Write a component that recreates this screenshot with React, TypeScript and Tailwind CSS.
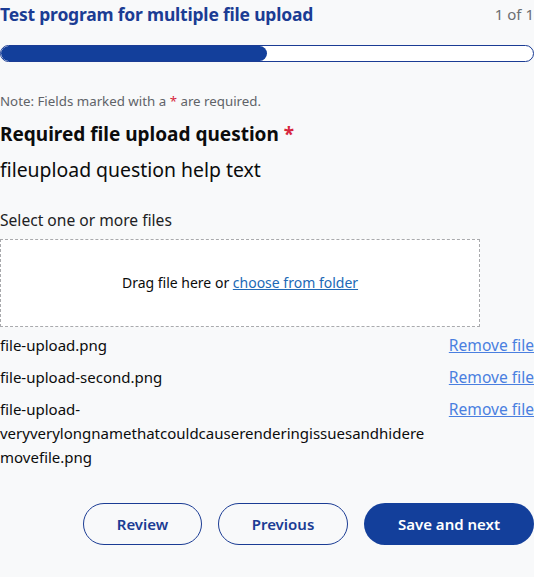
const files = [
  "file-upload.png",
  "file-upload-second.png",
  "file-upload-veryverylongnamethatcouldcauserenderingissuesandhideremovefile.png",
];

export default function App() {
  return (
    <div
      className="min-h-screen w-[534px] bg-[#f8f9fa] text-[#0b0c0c]"
      style={{ fontFamily: '"Noto Sans", "Open Sans", sans-serif' }}
    >
      {/* Header */}
      <div className="flex items-start justify-between pt-[2px]">
        <h1 className="text-[17.5px] leading-[24px] font-bold text-[#1b3c94] tracking-[-0.2px]">
          Test program for multiple file upload
        </h1>
        <span className="text-[15px] leading-[24px] text-[#6b6e72]">1 of 1</span>
      </div>

      <div className="mt-[19px] h-[17px] w-full rounded-full border border-[#1b3c94] bg-white overflow-hidden">
        <div className="h-full w-1/2 rounded-full bg-[#133f9b]" />
      </div>

      <p className="mt-[29px] text-[13.3px] leading-[20px] text-[#5f6368]">
        Note: Fields marked with a <span className="text-[#d7263d]">*</span> are required.
      </p>

      <h2 className="mt-[10px] text-[19px] leading-[26px] font-bold">
        Required file upload question <span className="text-[#d7263d]">*</span>
      </h2>
      <p className="mt-[10px] text-[19.4px] leading-[26px]">fileupload question help text</p>

      <p className="mt-[26px] text-[15.6px] leading-[22px] text-[#202124]">Select one or more files</p>

      <div className="mt-[8px] flex h-[88px] w-[480px] items-center justify-center border border-dashed border-[#a9aaad] bg-white">
        <p className="text-[14px] leading-[20px]">
          Drag file here or{" "}
          <a href="#" className="text-[#2169b6] underline">
            choose from folder
          </a>
        </p>
      </div>

      {/* Uploaded files */}
      <ul className="mt-[6px] flex flex-col gap-[8px]">
        {files.map((name) => (
          <li key={name} className="flex items-start justify-between gap-[16px]">
            <span className="w-[430px] text-[15px] leading-[24px] [overflow-wrap:anywhere]">{name}</span>
            <a href="#" className="shrink-0 text-[15.6px] leading-[24px] text-[#4a7fe0] underline">
              Remove file
            </a>
          </li>
        ))}
      </ul>

      {/* Actions */}
      <div className="mt-[34px] flex justify-end gap-[16px]">
        <button className="h-[42px] w-[119px] rounded-full border border-[#1b3c94] text-[15px] font-semibold text-[#1b3c94]">
          Review
        </button>
        <button className="h-[42px] w-[130px] rounded-full border border-[#1b3c94] text-[15px] font-semibold text-[#1b3c94]">
          Previous
        </button>
        <button className="h-[42px] w-[170px] rounded-full bg-[#133f9b] text-[15px] font-semibold text-white">
          Save and next
        </button>
      </div>
    </div>
  );
}
